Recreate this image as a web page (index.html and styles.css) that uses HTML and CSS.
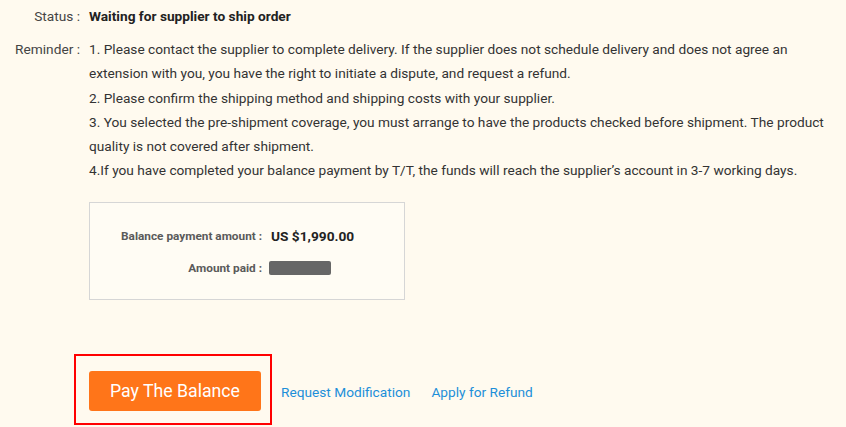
FILE: index.html
```html
<!DOCTYPE html>
<html>
<head>
<meta charset="utf-8">
<link rel="stylesheet" href="styles.css">
</head>
<body>
<div class="page">
  <div class="row status">
    <div class="label">Status :</div>
    <div class="value strong">Waiting for supplier to ship order</div>
  </div>
  <div class="row reminder">
    <div class="label">Reminder :</div>
    <div class="value">
      <p>1. Please contact the supplier to complete delivery. If the supplier does not schedule delivery and does not agree an extension with you, you have the right to initiate a dispute, and request a refund.</p>
      <p>2. Please confirm the shipping method and shipping costs with your supplier.</p>
      <p>3. You selected the pre-shipment coverage, you must arrange to have the products checked before shipment. The product quality is not covered after shipment.</p>
      <p>4.If you have completed your balance payment by T/T, the funds will reach the supplier’s account in 3-7 working days.</p>
    </div>
  </div>
  <div class="summary">
    <div class="sum-row">
      <div class="sum-label">Balance payment amount :</div>
      <div class="sum-value">US $1,990.00</div>
    </div>
    <div class="sum-row">
      <div class="sum-label">Amount paid :</div>
      <div class="sum-value"><span class="redacted"></span></div>
    </div>
  </div>
  <div class="actions">
    <div class="highlight">
      <button class="pay">Pay The Balance</button>
    </div>
    <a class="link" href="#">Request Modification</a>
    <a class="link" href="#">Apply for Refund</a>
  </div>
</div>
</body>
</html>
```
FILE: styles.css
```css
html, body {
  margin: 0;
  padding: 0;
  background: #fffaef;
}
body {
  font-family: Roboto, "Liberation Sans", sans-serif;
  font-size: 13.7px;
  color: #333;
}
.page {
  padding-top: 4px;
  width: 846px;
}
.row {
  display: flex;
}
.label {
  width: 80px;
  text-align: right;
  flex: none;
  margin-right: 9px;
  color: #444;
}
.status {
  line-height: 24px;
}
.strong {
  font-weight: bold;
  font-size: 13.7px;
  color: #222;
}
.reminder {
  margin-top: 9px;
  line-height: 24.3px;
}
.reminder .value {
  width: 740px;
}
.reminder p {
  margin: 0;
}
.summary {
  margin: 19px 0 0 89px;
  border: 1px solid #d6d6d6;
  background: #fffcf4;
  box-sizing: border-box;
  width: 316px;
  height: 98px;
  padding-top: 17px;
}
.sum-row {
  display: flex;
  align-items: center;
  height: 32px;
}
.sum-label {
  width: 172px;
  text-align: right;
  font-size: 11.8px;
  font-weight: bold;
  color: #5a5a5a;
  margin-right: 9px;
}
.sum-value {
  font-size: 13.7px;
  font-weight: bold;
  color: #222;
}
.redacted {
  display: block;
  width: 62px;
  height: 14px;
  background: #666;
  border-radius: 2px;
  margin-left: -2px;
}
.actions {
  display: flex;
  align-items: center;
  margin-top: 54px;
  margin-left: 74px;
}
.highlight {
  border: 2px solid #f00;
  padding: 15px 10px 12px 13px;
  width: 198px;
  box-sizing: border-box;
  margin-right: 9px;
}
.pay {
  display: block;
  width: 172px;
  height: 40px;
  border: none;
  border-radius: 3px;
  background: #ff7519;
  color: #fff;
  font-family: Roboto, "Liberation Sans", sans-serif;
  font-size: 17.7px;
  padding: 0;
}
.link {
  color: #1d8fd9;
  text-decoration: none;
  font-size: 13.7px;
  margin-right: 21px;
  position: relative;
  top: 3px;
}
```
